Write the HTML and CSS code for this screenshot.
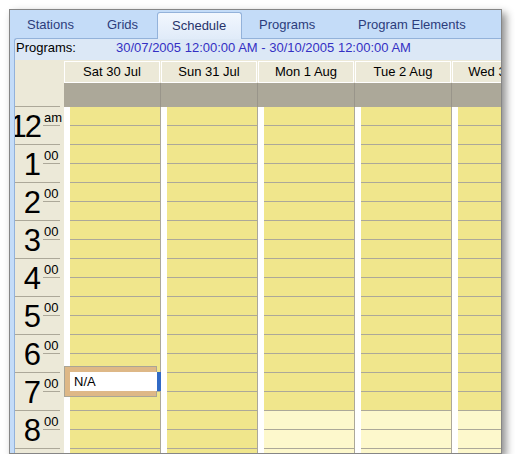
FILE: index.html
```html
<!DOCTYPE html>
<html>
<head>
<meta charset="utf-8">
<link rel="stylesheet" href="styles.css">
</head>
<body>
<div class="window">
  <div class="tabs">
    <div class="tab t1">Stations</div>
    <div class="tab t2">Grids</div>
    <div class="tab t3 active">Schedule</div>
    <div class="tab t4">Programs</div>
    <div class="tab t5">Program Elements</div>
  </div>
  <div class="panel">
    <div class="info"><span class="label">Programs:</span><span class="range">30/07/2005 12:00:00 AM - 30/10/2005 12:00:00 AM</span></div>
    <div class="schedule">
      <div class="timecol">
        <div class="corner"></div>
        <div class="hour"><span class="num tight">12</span><span class="sup">am</span></div>
        <div class="hour"><span class="num">1</span><span class="sup">00</span></div>
        <div class="hour"><span class="num">2</span><span class="sup">00</span></div>
        <div class="hour"><span class="num">3</span><span class="sup">00</span></div>
        <div class="hour"><span class="num">4</span><span class="sup">00</span></div>
        <div class="hour"><span class="num">5</span><span class="sup">00</span></div>
        <div class="hour"><span class="num">6</span><span class="sup">00</span></div>
        <div class="hour"><span class="num">7</span><span class="sup">00</span></div>
        <div class="hour"><span class="num">8</span><span class="sup">00</span></div>
      </div>

      <div class="day">
        <div class="dayhead">Sat 30 Jul</div>
        <div class="band"></div>
        <div class="body">
          <div class="strip"></div>
          <div class="slots">
            <div class="slot"></div><div class="slot"></div><div class="slot"></div><div class="slot"></div>
            <div class="slot"></div><div class="slot"></div><div class="slot"></div><div class="slot"></div>
            <div class="slot"></div><div class="slot"></div><div class="slot"></div><div class="slot"></div>
            <div class="slot"></div><div class="slot"></div><div class="slot"></div><div class="slot"></div>
            <div class="slot"></div><div class="slot"></div><div class="slot"></div><div class="slot"></div>
          </div>
        </div>
        <div class="editor">
          <div class="edit-box">N/A</div>
          <div class="edit-bar"></div>
        </div>
      </div>

      <div class="day">
        <div class="dayhead">Sun 31 Jul</div>
        <div class="band"></div>
        <div class="body">
          <div class="strip"></div>
          <div class="slots">
            <div class="slot"></div><div class="slot"></div><div class="slot"></div><div class="slot"></div>
            <div class="slot"></div><div class="slot"></div><div class="slot"></div><div class="slot"></div>
            <div class="slot"></div><div class="slot"></div><div class="slot"></div><div class="slot"></div>
            <div class="slot"></div><div class="slot"></div><div class="slot"></div><div class="slot"></div>
            <div class="slot"></div><div class="slot"></div><div class="slot"></div><div class="slot"></div>
          </div>
        </div>
      </div>

      <div class="day">
        <div class="dayhead">Mon 1 Aug</div>
        <div class="band"></div>
        <div class="body">
          <div class="strip"></div>
          <div class="slots">
            <div class="slot"></div><div class="slot"></div><div class="slot"></div><div class="slot"></div>
            <div class="slot"></div><div class="slot"></div><div class="slot"></div><div class="slot"></div>
            <div class="slot"></div><div class="slot"></div><div class="slot"></div><div class="slot"></div>
            <div class="slot"></div><div class="slot"></div><div class="slot"></div><div class="slot"></div>
            <div class="slot work"></div><div class="slot work"></div><div class="slot work"></div><div class="slot work"></div>
          </div>
        </div>
      </div>

      <div class="day">
        <div class="dayhead">Tue 2 Aug</div>
        <div class="band"></div>
        <div class="body">
          <div class="strip"></div>
          <div class="slots">
            <div class="slot"></div><div class="slot"></div><div class="slot"></div><div class="slot"></div>
            <div class="slot"></div><div class="slot"></div><div class="slot"></div><div class="slot"></div>
            <div class="slot"></div><div class="slot"></div><div class="slot"></div><div class="slot"></div>
            <div class="slot"></div><div class="slot"></div><div class="slot"></div><div class="slot"></div>
            <div class="slot work"></div><div class="slot work"></div><div class="slot work"></div><div class="slot work"></div>
          </div>
        </div>
      </div>

      <div class="day">
        <div class="dayhead">Wed 3 Aug</div>
        <div class="band"></div>
        <div class="body">
          <div class="strip"></div>
          <div class="slots">
            <div class="slot"></div><div class="slot"></div><div class="slot"></div><div class="slot"></div>
            <div class="slot"></div><div class="slot"></div><div class="slot"></div><div class="slot"></div>
            <div class="slot"></div><div class="slot"></div><div class="slot"></div><div class="slot"></div>
            <div class="slot"></div><div class="slot"></div><div class="slot"></div><div class="slot"></div>
            <div class="slot work"></div><div class="slot work"></div><div class="slot work"></div><div class="slot work"></div>
          </div>
        </div>
      </div>
    </div>
  </div>
</div>
</body>
</html>
```

FILE: styles.css
```css
html, body {
  margin: 0;
  padding: 0;
  background: #ffffff;
}

body {
  font-family: "Liberation Sans", Arial, sans-serif;
  font-size: 13px;
  color: #000;
}

.window {
  margin: 9px 0 0 9px;
  width: 493px;
  height: 445px;
  box-sizing: border-box;
  border: 1px solid #868686;
  background: #c4dcf8;
  box-shadow: 4px 4px 8px rgba(0, 0, 0, 0.45);
  display: flex;
  flex-direction: column;
  overflow: hidden;
}

/* Tabs */
.tabs {
  height: 28px;
  flex: none;
  display: flex;
  align-items: flex-end;
  padding-left: 4px;
  position: relative;
  z-index: 2;
}

.tab {
  height: 26px;
  line-height: 26px;
  box-sizing: border-box;
  color: #2c3c7c;
  white-space: nowrap;
  flex: none;
}

.t1 { width: 79px; padding-left: 13px; }
.t2 { width: 64px; padding-left: 14px; }
.t3 { width: 85px; padding-left: 14px; }
.t4 { width: 101px; padding-left: 17px; }
.t5 { padding-left: 15px; }

.tab.active {
  height: 27px;
  margin-bottom: -1px;
  line-height: 26px;
  border: 1px solid #93b2da;
  border-bottom: none;
  border-radius: 3px 3px 0 0;
  background: linear-gradient(#f2f7fe, #e0ebf9);
  color: #26336a;
}

/* Panel */
.panel {
  flex: 1;
  margin-left: 4px;
  border-left: 1px solid #93b2da;
  border-top: 1px solid #93b2da;
  border-top-left-radius: 3px;
  background: #dce8f6;
  display: flex;
  flex-direction: column;
  min-height: 0;
}

.info {
  height: 21px;
  flex: none;
  line-height: 18px;
  white-space: nowrap;
  padding-left: 1px;
  display: flex;
}

.label {
  width: 100px;
  flex: none;
}

.range {
  color: #3430c4;
}

/* Schedule */
.schedule {
  flex: 1;
  display: flex;
  background: #ece9d8;
  overflow: hidden;
  min-height: 0;
}

.timecol {
  width: 49px;
  flex: none;
}

.corner {
  height: 46px;
  border-bottom: 1px solid #aca899;
  margin-right: 4px;
}

.hour {
  height: 38px;
  box-sizing: border-box;
  border-bottom: 1px solid #aca899;
  margin-right: 4px;
  display: flex;
  justify-content: flex-end;
  align-items: flex-start;
}

.num {
  font-size: 31px;
  line-height: 31px;
  padding-top: 4px;
  padding-right: 2px;
}

.num.tight {
  letter-spacing: -2px;
  padding-right: 3px;
}

.sup {
  width: 17px;
  height: 19px;
  box-sizing: border-box;
  border-bottom: 1px solid #aca899;
  font-size: 13px;
  line-height: 15px;
  padding-top: 3px;
  padding-left: 1px;
  white-space: nowrap;
}

.day {
  width: 97px;
  flex: none;
  position: relative;
  display: flex;
  flex-direction: column;
}

.dayhead {
  margin-top: 1px;
  height: 22px;
  box-sizing: border-box;
  border: 1px solid #ffffff;
  margin-right: 1px;
  text-align: center;
  line-height: 20px;
  white-space: nowrap;
  flex: none;
}

.band {
  height: 24px;
  background: #aca899;
  border-right: 1px solid #99958a;
  flex: none;
}

.body {
  flex: 1;
  display: flex;
  background: #ffffff;
  border-right: 1px solid #aca899;
}

.strip {
  width: 6px;
  flex: none;
}

.slots {
  flex: 1;
}

.slot {
  height: 19px;
  box-sizing: border-box;
  background: #f0e68c;
  border-bottom: 1px solid #aca899;
}

.slot.work {
  background: #fdf8cc;
}

/* In-place editor */
.editor {
  position: absolute;
  left: 0;
  top: 306px;
  width: 93px;
  height: 31px;
  box-sizing: border-box;
  background: #deb887;
  border: 1px solid #a9a596;
}

.edit-box {
  position: absolute;
  left: 5px;
  top: 5px;
  width: 87px;
  height: 19px;
  box-sizing: border-box;
  background: #ffffff;
  padding-left: 4px;
  line-height: 19px;
}

.edit-bar {
  position: absolute;
  left: 92px;
  top: 5px;
  width: 4px;
  height: 19px;
  background: #316ac5;
}
```
